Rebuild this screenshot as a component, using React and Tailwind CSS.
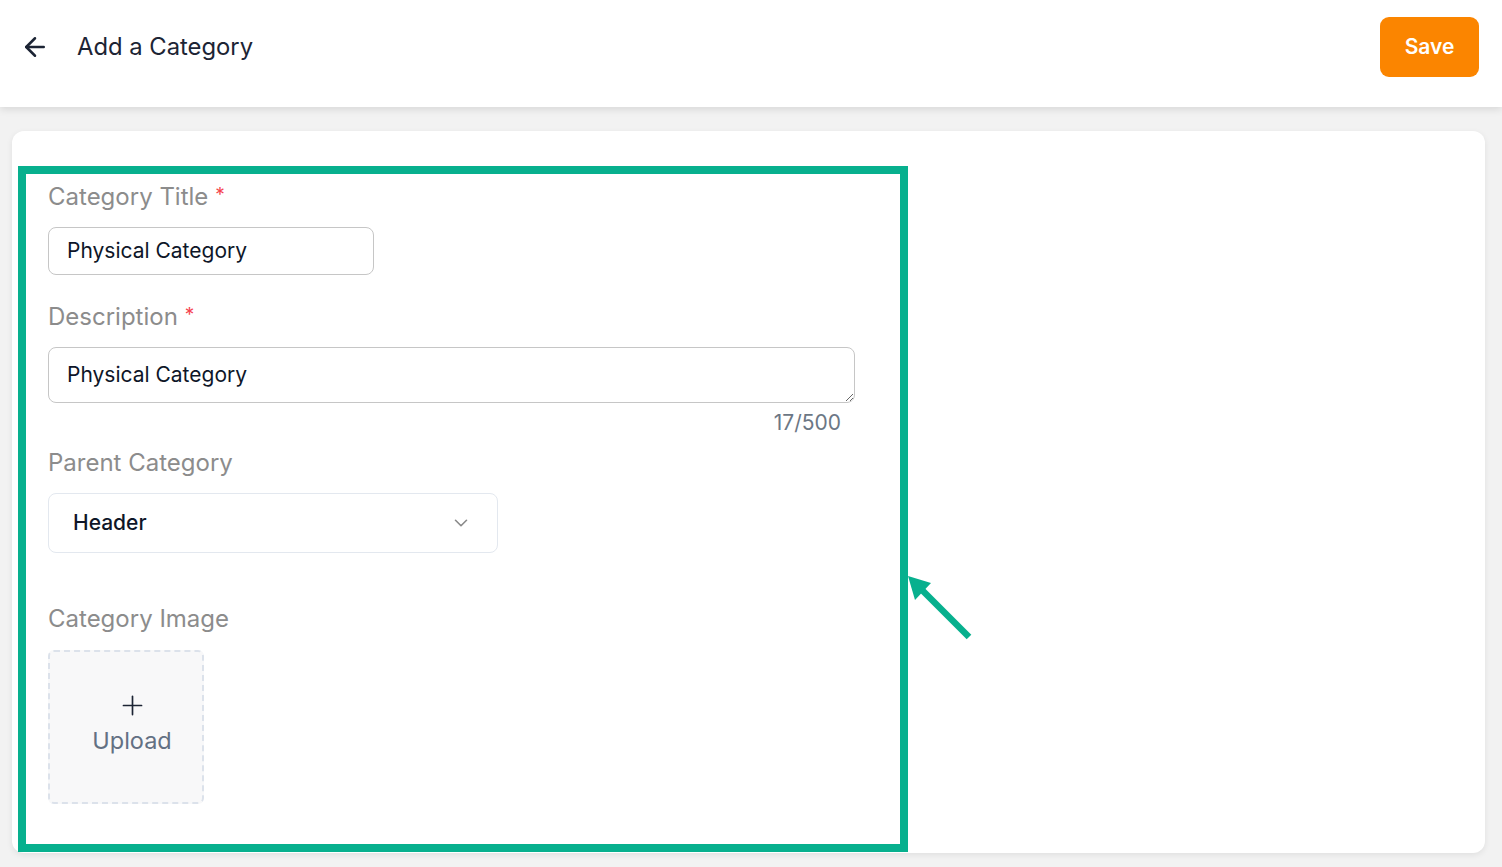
import React from 'react';
import { ArrowLeft, ChevronDown, Plus } from 'lucide-react';

const Label = ({ children, required }) => (
    <div className="h-[28px] flex items-center text-[24px] text-[#8c8c8c]">
        {children}
        {required && <span className="ml-[7px] text-[#f5454f] text-[19px] -mt-[4px]">*</span>}
    </div>
);

const App = () => {
    return (
        <div className="relative min-h-screen bg-[#f2f2f2]" style={{ fontFamily: 'Inter, "Noto Sans", sans-serif' }}>
            <header className="h-[107px] bg-white flex items-start justify-between pt-[17px] pl-[20px] pr-[23px] shadow-[0_2px_8px_rgba(0,0,0,0.12)] relative z-10">
                <div className="h-[60px] flex items-center">
                    <ArrowLeft size={30} strokeWidth={2} className="text-[#1c2434]" />
                    <h1 className="ml-[27px] text-[23.8px] text-[#1c2434]">Add a Category</h1>
                </div>
                <button className="w-[99px] h-[60px] bg-[#fb8500] text-white text-[21px] font-semibold rounded-[9px]">
                    Save
                </button>
            </header>

            <main className="pt-[24px] pl-[12px] pr-[17px] pb-[14px]">
                <div className="bg-white rounded-[12px] shadow-[0_2px_6px_rgba(0,0,0,0.08)] h-[722px] pt-[52px] pl-[36px]">
                    <Label required>Category Title</Label>
                    <div className="mt-[16px] w-[326px] h-[48px] border border-[#c6c6c6] rounded-[8px] flex items-center pl-[18px] text-[21px] text-[#0e1628]">
                        Physical Category
                    </div>

                    <div className="mt-[28px]">
                        <Label required>Description</Label>
                    </div>
                    <textarea
                        readOnly
                        value="Physical Category"
                        className="mt-[16px] block w-[807px] h-[56px] border border-[#c6c6c6] rounded-[8px] pl-[18px] pt-[13px] text-[21px] leading-[28px] text-[#0e1628] resize-y outline-none"
                    />
                    <div className="w-[807px] mt-[8px] pr-[14px] text-right text-[21px] leading-[24px] text-[#6c7785]">17/500</div>

                    <div className="mt-[14px]">
                        <Label>Parent Category</Label>
                    </div>
                    <div className="mt-[16px] w-[450px] h-[60px] border border-[#e3e8ef] rounded-[8px] flex items-center justify-between pl-[24px] pr-[25px]">
                        <span className="text-[21px] font-medium text-[#0e1628]">Header</span>
                        <ChevronDown size={22} strokeWidth={1.75} className="text-[#8a8a8a]" />
                    </div>

                    <div className="mt-[52px]">
                        <Label>Category Image</Label>
                    </div>
                    <div className="mt-[17px] w-[156px] h-[154px] bg-[#f8f8f9] border-2 border-dashed border-[#dce2eb] rounded-[6px] flex flex-col items-center justify-center pl-[12px]">
                        <Plus size={31} strokeWidth={1.3} className="text-[#1c2434] -mt-[6px]" />
                        <span className="mt-[2px] text-[23.5px] text-[#637083]">Upload</span>
                    </div>
                </div>
            </main>

            {/* annotation overlay */}
            <div className="absolute left-[18px] top-[166px] w-[890px] h-[686px] border-[8px] border-[#07b08e] pointer-events-none" />
            <svg className="absolute left-[900px] top-[568px] pointer-events-none" width="80" height="80" viewBox="0 0 80 80">
                <line x1="69" y1="69" x2="16" y2="16" stroke="#07b08e" strokeWidth="6.5" />
                <polygon points="8,8 31,15 15,32" fill="#07b08e" />
            </svg>
        </div>
    );
};

export default App;
